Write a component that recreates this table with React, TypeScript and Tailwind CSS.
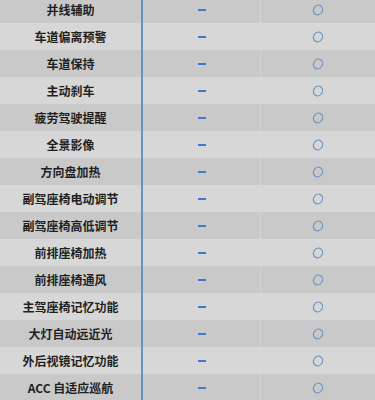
const rows = [
  '并线辅助',
  '车道偏离预警',
  '车道保持',
  '主动刹车',
  '疲劳驾驶提醒',
  '全景影像',
  '方向盘加热',
  '副驾座椅电动调节',
  '副驾座椅高低调节',
  '前排座椅加热',
  '前排座椅通风',
  '主驾座椅记忆功能',
  '大灯自动远近光',
  '外后视镜记忆功能',
  'ACC 自适应巡航',
];

function Ring() {
  return (
    <svg width="14" height="14" viewBox="0 0 14 14">
      <ellipse
        cx="7"
        cy="7"
        rx="4.4"
        ry="5"
        transform="rotate(35 7 7)"
        fill="none"
        stroke="#6f93c4"
        strokeWidth="1.2"
      />
    </svg>
  );
}

export default function App() {
  return (
    <div
      className="w-[375px] h-[400px] overflow-hidden bg-[#cfcfcf]"
      style={{ fontFamily: '"Noto Sans CJK SC", "Liberation Sans", sans-serif' }}
    >
      <div className="-mt-[4px] relative">
        {rows.map((name, i) => (
          <div
            key={name}
            className={`flex h-[27px] items-center ${i % 2 === 0 ? 'bg-[#c9c9c9]' : 'bg-[#d7d7d7]'}`}
          >
            <div className="w-[141px] text-center text-[12px] font-semibold text-[#1f1f1f]">{name}</div>
            <div className="w-[2px] self-stretch bg-[#6a91c0]" />
            <div className="flex w-[117px] justify-center">
              <div className="h-[2px] w-[8px] bg-[#3d7bd0]" />
            </div>
            <div className="w-px self-stretch border-l border-dotted border-[#dcdcdc]" />
            <div className="flex flex-1 justify-center">
              <Ring />
            </div>
          </div>
        ))}
      </div>
    </div>
  );
}
